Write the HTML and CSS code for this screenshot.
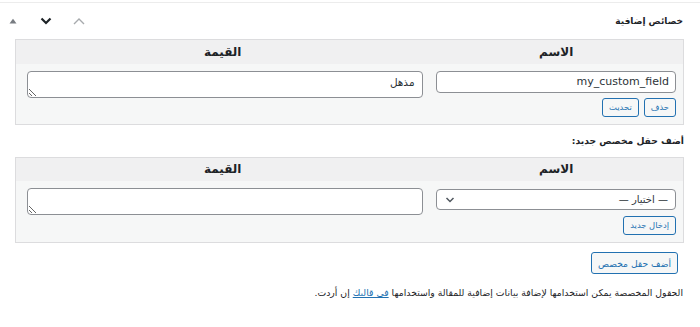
FILE: index.html
```html
<!DOCTYPE html>
<html lang="ar" dir="rtl">
<head>
<meta charset="utf-8">
<link rel="stylesheet" href="styles.css">
</head>
<body>
<div class="postbox">
  <div class="postbox-header">
    <h2 class="hndle">خصائص إضافية</h2>
    <div class="handle-actions">
      <span class="act act-up-dim"><svg width="12" height="8" viewBox="0 0 12 8"><path d="M1 7 L6 2 L11 7" fill="none" stroke="#a7aaad" stroke-width="1.4"/></svg></span>
      <span class="act act-down"><svg width="12" height="8" viewBox="0 0 12 8"><path d="M1.5 1.5 L6 6 L10.5 1.5" fill="none" stroke="#1d2327" stroke-width="2.2"/></svg></span>
      <span class="act act-toggle"><svg width="8" height="6" viewBox="0 0 8 6"><path d="M0.5 5.5 L4 0.8 L7.5 5.5 Z" fill="#787c82"/></svg></span>
    </div>
  </div>
  <div class="inside">
    <table class="meta">
      <thead>
        <tr><th class="col-name">الاسم</th><th class="col-value">القيمة</th></tr>
      </thead>
      <tbody>
        <tr>
          <td class="cell-name">
            <input class="field" type="text" value="my_custom_field" dir="ltr">
            <div class="btns">
              <button class="btn">حذف</button>
              <button class="btn">تحديث</button>
            </div>
          </td>
          <td class="cell-value"><textarea class="area">مذهل</textarea></td>
        </tr>
      </tbody>
    </table>

    <p class="new-label">أضف حقل مخصص جديد:</p>

    <table class="meta meta2">
      <thead>
        <tr><th class="col-name">الاسم</th><th class="col-value">القيمة</th></tr>
      </thead>
      <tbody>
        <tr>
          <td class="cell-name">
            <div class="select">
              <span>— اختيار —</span>
              <svg width="10" height="6" viewBox="0 0 10 6"><path d="M1.5 1 L5 4.5 L8.5 1" fill="none" stroke="#50575e" stroke-width="1.5"/></svg>
            </div>
            <div class="btns">
              <button class="btn">إدخال جديد</button>
            </div>
          </td>
          <td class="cell-value"><textarea class="area area2"></textarea></td>
        </tr>
      </tbody>
    </table>

    <div class="add-row"><button class="btn btn-add">أضف حقل مخصص</button></div>

    <p class="help">الحقول المخصصة يمكن استخدامها لإضافة بيانات إضافية للمقالة واستخدامها <a href="#">في قالبك</a> إن أردت.</p>
  </div>
</div>
</body>
</html>
```
FILE: styles.css
```css
* { box-sizing: border-box; }
html, body { margin: 0; padding: 0; background: #fff; }
body {
  font-family: "DejaVu Sans", "Liberation Sans", sans-serif;
  color: #1d2327;
  font-size: 11px;
}
.postbox {
  margin-top: 2px;
  border-top: 1px solid #ececec;
}
.postbox-header {
  height: 36px;
  display: flex;
  align-items: center;
  justify-content: space-between;
  padding: 0 17px 0 8px;
}
.hndle {
  margin: 0;
  font-size: 9px;
  font-weight: bold;
  color: #1d2327;
}
.handle-actions {
  display: flex;
  flex-direction: row-reverse;
  align-items: center;
  direction: ltr;
}
.act {
  display: flex;
  align-items: center;
  justify-content: center;
  height: 20px;
}
.act-up-dim { width: 12px; }
.act-down { width: 12px; margin-right: 21px; }
.act-toggle { width: 10px; order: 1; margin: 0 22px 0 0; }

.inside { padding: 0 16px 0 15px; }

.meta {
  width: 100%;
  border-collapse: collapse;
  border: 1px solid #dcdcde;
  background: #f6f7f7;
}
.meta th {
  background: #f0f0f1;
  height: 24px;
  padding: 0;
  font-size: 12px;
  font-weight: bold;
  text-align: center;
  color: #1d2327;
}
.col-name { width: 254px; }
.meta td { vertical-align: top; padding: 0; }
.cell-name { padding: 7px 7px 7px 6px !important; }
.cell-value { padding: 7px 7px 7px 11px !important; }

.field {
  display: block;
  width: 100%;
  height: 22px;
  border: 1px solid #8c8f94;
  border-radius: 4px;
  background: #fff;
  font-family: "DejaVu Sans", sans-serif;
  font-size: 11px;
  color: #2c3338;
  padding: 0 6px;
  text-align: right;
  margin: 0;
}
.area {
  display: block;
  width: 100%;
  height: 27px;
  border: 1px solid #8c8f94;
  border-radius: 4px;
  background: #fff;
  font-family: "DejaVu Sans", sans-serif;
  font-size: 10.5px;
  color: #2c3338;
  padding: 4px 7px;
  resize: vertical;
  margin: 0;
  overflow: hidden;
}

.btns {
  display: flex;
  gap: 5px;
  margin-top: 5px;
}
.btn {
  height: 19px;
  padding: 0 6px;
  border: 1px solid #2271b1;
  border-radius: 3px;
  background: #f6f7f7;
  color: #2271b1;
  font-family: "DejaVu Sans", sans-serif;
  font-size: 8.4px;
  line-height: 17px;
  margin: 0;
}

.new-label {
  margin: 0;
  height: 32px;
  line-height: 32px;
  font-weight: bold;
  font-size: 9.2px;
}

.select {
  height: 21px;
  border: 1px solid #8c8f94;
  border-radius: 4px;
  background: #fff;
  display: flex;
  align-items: center;
  justify-content: space-between;
  padding: 0 7px 0 8px;
  font-size: 10px;
  color: #2c3338;
  margin-top: 1px;
}
.meta2 .btns { margin-top: 6px; }

.add-row {
  padding: 9px 6px 0;
  display: flex;
}
.btn-add {
  height: 22px;
  font-size: 9.2px;
  padding: 0 6px;
}

.help {
  margin: 13px 1px 0;
  font-size: 9.3px;
  color: #1d2327;
}
.help a { color: #2271b1; }
```
